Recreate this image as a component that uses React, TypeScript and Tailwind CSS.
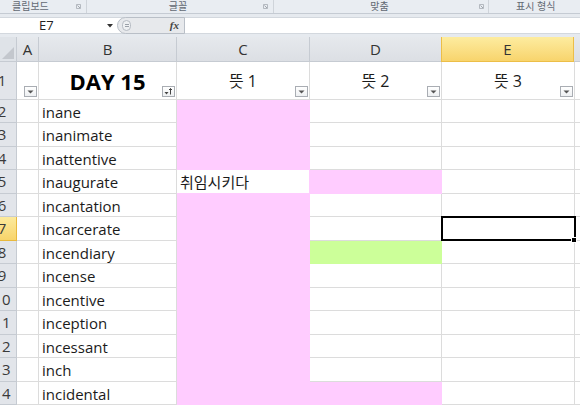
import React from 'react';

const FONT = { fontFamily: '"Open Sans", "Noto Sans CJK KR", sans-serif' };

const words = [
  'inane',
  'inanimate',
  'inattentive',
  'inaugurate',
  'incantation',
  'incarcerate',
  'incendiary',
  'incense',
  'incentive',
  'inception',
  'incessant',
  'inch',
  'incidental',
];

// row heights alternate so 13 rows land on a 23.5px pitch
const heights = [23, 24, 23, 24, 23, 24, 23, 24, 23, 24, 23, 24, 23];

type Fill = 'pink' | 'green' | 'none';

function fillFor(row: number, col: 'C' | 'D'): Fill {
  if (col === 'C') return row === 5 ? 'none' : 'pink';
  if (row === 5 || row === 14) return 'pink';
  if (row === 8) return 'green';
  return 'none';
}

const fillClass: Record<Fill, string> = {
  pink: 'bg-[#ffccff] border-[#ffccff]',
  green: 'bg-[#ccff99] border-[#ccff99]',
  none: 'bg-white border-[#dcdcdc]',
};

function FilterButton({ sorted }: { sorted?: boolean }) {
  return (
    <div className="w-[13px] h-[11px] border border-[#a9adb3] bg-gradient-to-b from-white to-[#eef0f2] flex items-center justify-center mb-[2px] mr-[1px]">
      {sorted ? (
        <svg width="9" height="7" viewBox="0 0 9 7">
          <path d="M0.5 4 L4.5 4 L2.5 6.5 Z" fill="#444" />
          <path d="M6.5 0.5 L6.5 6.5" stroke="#444" strokeWidth="1" />
          <path d="M5 2 L6.5 0.5 L8 2" stroke="#444" strokeWidth="1" fill="none" />
        </svg>
      ) : (
        <svg width="7" height="4" viewBox="0 0 7 4">
          <path d="M0.5 0.5 L6.5 0.5 L3.5 3.5 Z" fill="#555" />
        </svg>
      )}
    </div>
  );
}

function Launcher() {
  return (
    <svg width="5" height="5" viewBox="0 0 5 5" className="opacity-70">
      <path d="M0.5 0.5 L4.5 0.5 L4.5 4.5 L0.5 4.5 Z" stroke="#8a9098" fill="none" strokeWidth="0.8" />
      <path d="M1.5 1.5 L4 4" stroke="#6a7078" strokeWidth="0.8" />
    </svg>
  );
}

function RowHeader({ n, active }: { n: number; active?: boolean }) {
  return (
    <div
      className={`w-[17px] shrink-0 overflow-hidden border-r border-b flex items-center ${
        active
          ? 'bg-gradient-to-b from-[#fcea9c] to-[#f8d46a] border-[#e8b93e]'
          : 'bg-[#e2e5ea] border-[#c6cbd2]'
      }`}
    >
      <div className="w-[30px] shrink-0 ml-[-13px] text-center text-[15px] text-[#3a3a3a] leading-none">{n}</div>
    </div>
  );
}

export default function App() {
  return (
    <div className="w-[580px] h-[406px] overflow-hidden bg-white text-[#1b1b1b]" style={FONT}>
      {/* Ribbon group labels */}
      <div className="h-[14px] flex bg-[#e9edf2] border-b border-[#c5cbd3] text-[10px] leading-[13px] text-[#626973]">
        <div className="w-[87px] flex items-center border-r border-[#cfd4da] pl-[12px] pr-[5px]">
          <span className="flex-1">클립보드</span>
          <Launcher />
        </div>
        <div className="w-[187px] flex items-center border-r border-[#cfd4da] pr-[5px]">
          <span className="flex-1 text-center pl-[6px]">글꼴</span>
          <Launcher />
        </div>
        <div className="w-[215px] flex items-center border-r border-[#cfd4da] pr-[4px]">
          <span className="flex-1 text-center pl-[6px]">맞춤</span>
          <Launcher />
        </div>
        <div className="flex-1 flex items-center pl-[27px]">
          <span>표시 형식</span>
        </div>
      </div>

      {/* Formula bar */}
      <div className="h-[23px] bg-[#e6eaef] pt-[3px] pb-[3px]">
        <div className="h-[17px] flex bg-white border-y border-[#d3d8de]">
          <div className="w-[117px] flex items-center">
            <span className="flex-1 pl-[39px] text-[13px] leading-none text-[#222]">E7</span>
            <svg width="6" height="4" viewBox="0 0 6 4" className="mr-[4px]">
              <path d="M0 0 L6 0 L3 3.5 Z" fill="#333" />
            </svg>
          </div>
          <div className="w-[68px] flex items-center bg-[#e7e9ec] border border-[#b9bfc7] rounded-l-full my-[-1px]">
            <div className="w-[9px] h-[11px] ml-[4px] rounded-full border border-[#b7bcc3] bg-[#eef0f2] flex flex-col items-center justify-center gap-[1px]">
              <div className="w-[4px] h-px bg-[#9ba1a9]" />
              <div className="w-[4px] h-px bg-[#9ba1a9]" />
            </div>
            <span className="ml-auto mr-[5px] text-[11px] leading-none italic font-bold text-[#444]" style={{ fontFamily: '"Liberation Serif", serif' }}>
              fx
            </span>
          </div>
          <div className="flex-1" />
        </div>
      </div>

      {/* Column headers */}
      <div className="h-[25px] flex text-[15px] text-[#333]">
        <div className="w-[17px] shrink-0 bg-[#dfe3e8] border-r border-b border-[#c6cbd2] relative">
          <svg width="12" height="12" viewBox="0 0 12 12" className="absolute right-[2px] bottom-[2px]">
            <path d="M12 0 L12 12 L0 12 Z" fill="#c3c7cd" />
          </svg>
        </div>
        {[
          { l: 'A', w: 'w-[22px]' },
          { l: 'B', w: 'w-[138px]' },
          { l: 'C', w: 'w-[133px]' },
          { l: 'D', w: 'w-[132px]' },
        ].map((c) => (
          <div
            key={c.l}
            className={`${c.w} shrink-0 bg-gradient-to-b from-[#e6e9ed] to-[#dcdfe4] border-r border-b border-[#c6cbd2] flex items-center justify-center`}
          >
            {c.l}
          </div>
        ))}
        <div className="w-[133px] shrink-0 bg-gradient-to-b from-[#fdec9f] to-[#f8d46c] border-x border-b border-[#ecbe48] ml-[-1px] flex items-center justify-center">
          E
        </div>
        <div className="flex-1 bg-gradient-to-b from-[#e6e9ed] to-[#dcdfe4] border-b border-[#c6cbd2]" />
      </div>

      {/* Row 1: headings with filters */}
      <div className="h-[38px] flex">
        <RowHeader n={1} />
        <div className="w-[22px] shrink-0 border-r border-b border-[#dcdcdc] flex items-end justify-end">
          <FilterButton />
        </div>
        <div className="w-[138px] shrink-0 border-r border-b border-[#dcdcdc] relative flex items-center justify-center">
          <span className="text-[22px] font-bold leading-none text-black">DAY 15</span>
          <div className="absolute right-0 bottom-0">
            <FilterButton sorted />
          </div>
        </div>
        {[
          { t: '뜻 1', w: 'w-[133px]' },
          { t: '뜻 2', w: 'w-[132px]' },
          { t: '뜻 3', w: 'w-[133px]' },
        ].map((c) => (
          <div key={c.t} className={`${c.w} shrink-0 border-r border-b border-[#dcdcdc] relative flex items-center justify-center`}>
            <span className="text-[16px] leading-none">{c.t}</span>
            <div className="absolute right-0 bottom-0">
              <FilterButton />
            </div>
          </div>
        ))}
        <div className="flex-1 border-b border-[#dcdcdc]" />
      </div>

      {/* Data rows */}
      {words.map((w, i) => {
        const row = i + 2;
        const c = fillFor(row, 'C');
        const d = fillFor(row, 'D');
        const selected = row === 7;
        return (
          <div key={row} className="flex text-[15px]" style={{ height: heights[i] }}>
            <RowHeader n={row} active={selected} />
            <div className="w-[22px] shrink-0 border-r border-b border-[#dcdcdc]" />
            <div className="w-[138px] shrink-0 border-r border-b border-[#dcdcdc] flex items-center pl-[3px] pt-[2px] leading-none">
              {w}
            </div>
            <div
              className={`w-[133px] shrink-0 border-r border-b flex items-center pl-[3px] pt-[1px] leading-none ${
                row === 5 ? 'bg-white border-[#ffccff]' : fillClass[c]
              }`}
            >
              {row === 5 ? '취임시키다' : null}
            </div>
            <div className={`w-[132px] shrink-0 border-r border-b ${fillClass[d]}`} />
            <div className="w-[133px] shrink-0 border-r border-b border-[#dcdcdc] relative">
              {selected && (
                <>
                  <div className="absolute left-[-1px] top-[-1px] right-[-2px] bottom-[-1px] border-2 border-black" />
                  <div className="absolute right-[-3px] bottom-[-3px] w-[6px] h-[6px] bg-black border border-white z-10" />
                </>
              )}
            </div>
            <div className="flex-1 border-b border-[#dcdcdc]" />
          </div>
        );
      })}
    </div>
  );
}
